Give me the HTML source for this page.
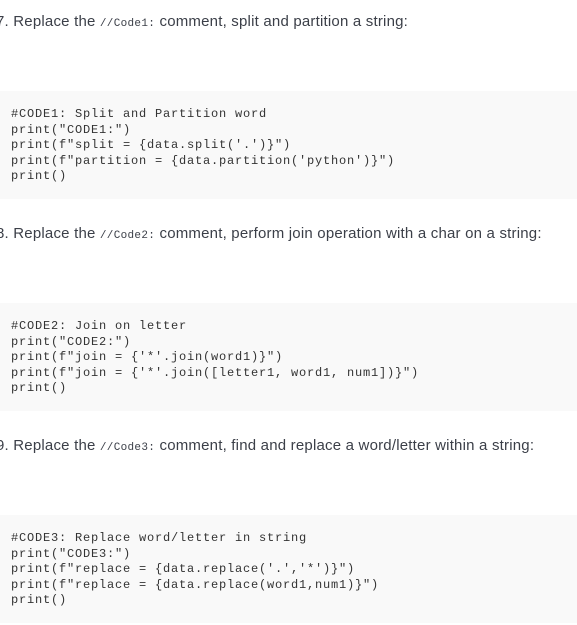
<!DOCTYPE html>
<html><head><style>
body{margin:0;width:577px;height:625px;background:#fff;position:relative;overflow:hidden}
.h{position:absolute;left:-4px;font-family:"Liberation Sans",sans-serif;font-size:15px;color:#3b3f48;letter-spacing:0.2px;white-space:nowrap}
.h code{font-family:"Liberation Mono",monospace;font-size:11px;letter-spacing:0.3px}
.b{position:absolute;left:0;width:577px;height:108px;background:#f9f9f9}
pre{position:absolute;left:11px;margin:0;font-family:"Liberation Mono","Courier New",monospace;font-size:12px;letter-spacing:0.8px;line-height:15.5px;color:#333}
</style></head><body>
<div class="h" style="top:13px">7. Replace the <code>//Code1:</code> comment, split and partition a string:</div>
<div class="b" style="top:91px"></div>
<pre style="top:107px">#CODE1: Split and Partition word
print("CODE1:")
print(f"split = {data.split('.')}")
print(f"partition = {data.partition('python')}")
print()</pre>
<div class="h" style="top:225px">8. Replace the <code>//Code2:</code> comment, perform join operation with a char on a string:</div>
<div class="b" style="top:303px"></div>
<pre style="top:319px">#CODE2: Join on letter
print("CODE2:")
print(f"join = {'*'.join(word1)}")
print(f"join = {'*'.join([letter1, word1, num1])}")
print()</pre>
<div class="h" style="top:437px">9. Replace the <code>//Code3:</code> comment, find and replace a word/letter within a string:</div>
<div class="b" style="top:515px"></div>
<pre style="top:531px">#CODE3: Replace word/letter in string
print("CODE3:")
print(f"replace = {data.replace('.','*')}")
print(f"replace = {data.replace(word1,num1)}")
print()</pre>
</body></html>
